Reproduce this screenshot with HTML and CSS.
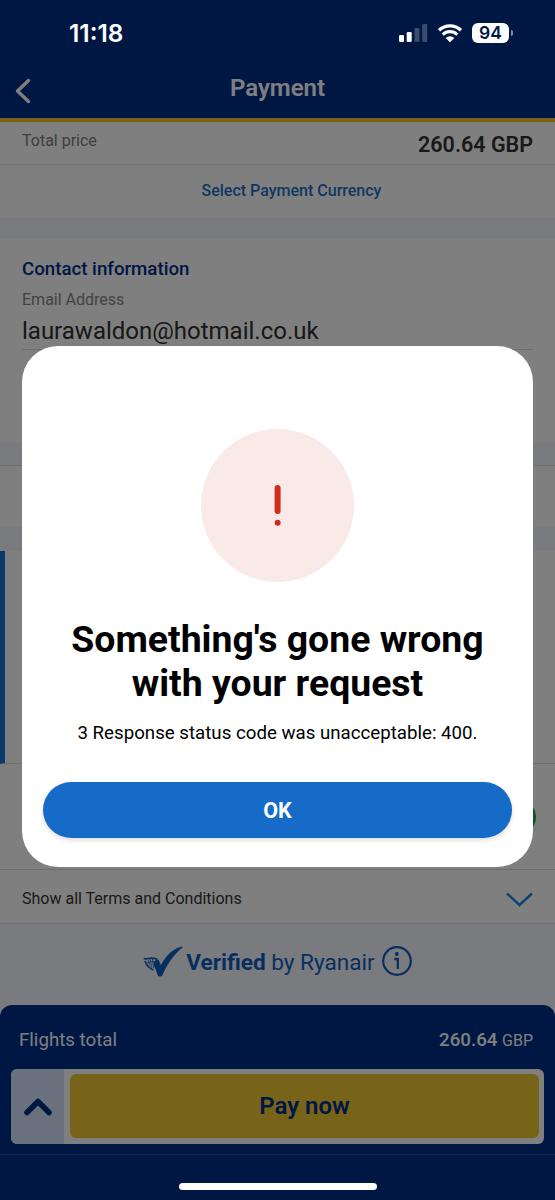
FILE: index.html
```html
<!DOCTYPE html>
<html lang="en">
<head>
    <meta charset="UTF-8">
    <meta name="viewport" content="width=device-width, initial-scale=1.0">
    <title>Payment</title>
    <link rel="stylesheet" href="styles.css">
</head>
<body>
    <div class="page">
        <header class="header">
            <svg class="back" width="16" height="26" viewBox="0 0 16 26"><path d="M13.5 2.500 2.500 13l11 10.500" fill="none" stroke="#fff" stroke-width="3.400" stroke-linecap="round" stroke-linejoin="round"/></svg>
            <h1>Payment</h1>
        </header>

        <section class="total-row">
            <span class="total-label">Total price</span>
            <span class="total-value">260.64 GBP</span>
        </section>
        <section class="currency">
            <a class="currency-link">Select Payment Currency</a>
        </section>

        <section class="contact">
            <h2>Contact information</h2>
            <div class="field-label">Email Address</div>
            <div class="field-value">laurawaldon@hotmail.co.uk</div>
        </section>

        <section class="spacer-card"></section>
        <section class="info-card"></section>
        <section class="toggle-row"><div class="toggle"></div></section>

        <section class="terms">
            <span>Show all Terms and Conditions</span>
            <svg width="28" height="16" viewBox="0 0 28 16"><path d="M2 2.500 14.500 14 27 2.500" fill="none" stroke="#1f87d8" stroke-width="2.400"/></svg>
        </section>

        <section class="verified">
            <svg class="harp" width="40" height="31" viewBox="0 0 40 31">
                <path d="M39.300.6C31 2.500 24.500 7.500 17.800 19L15.500 13.500c-2.500.3-4 2-5 4L15 30q2 .8 4 0C24.500 18 31 8 39.600 1.600z" fill="#0d5fc0"/>
                <path d="M.8 12.500c3 1.500 6.500-2 12.700.5l-1.500 8M2 15c1.500 4 4 7.500 8.500 9" fill="none" stroke="#0d5fc0" stroke-width="1.700"/>
                <path d="M5 13.500l1.500 6M7.200 13l1.500 8.500M9.500 13l1 9M4 16.500l8-1" fill="none" stroke="#0d5fc0" stroke-width=".8"/>
            </svg>
            <span class="verified-text"><b>Verified</b> by Ryanair</span>
            <svg class="info" width="30" height="30" viewBox="0 0 30 30">
                <circle cx="15" cy="15" r="13.800" fill="none" stroke="#0d5fc0" stroke-width="2.200"/>
                <circle cx="14.800" cy="8" r="2" fill="#0d5fc0"/>
                <path d="M12.300 13h3.500v10" fill="none" stroke="#0d5fc0" stroke-width="2.300"/>
            </svg>
        </section>

        <footer class="footer">
            <div class="flights">
                <span>Flights total</span>
                <span><b>260.64</b> <small>GBP</small></span>
            </div>
            <div class="pay-box">
                <div class="expand">
                    <svg width="28" height="20" viewBox="0 0 28 20"><path d="M3 15.500 14 4.500l11 11" fill="none" stroke="#002e88" stroke-width="5.600" stroke-linecap="round" stroke-linejoin="round"/></svg>
                </div>
                <button class="pay">Pay now</button>
            </div>
            <div class="footer-line"></div>
        </footer>
    </div>

    <div class="overlay">
        <div class="modal">
            <div class="alert-icon">
                <svg width="8" height="42" viewBox="0 0 8 42"><rect x=".6" y="0" width="6" height="29" rx="3" fill="#cf2b1f"/><circle cx="3.600" cy="37.700" r="3" fill="#cf2b1f"/></svg>
            </div>
            <h2>Something's gone wrong<br>with your request</h2>
            <p>3 Response status code was unacceptable: 400.</p>
            <button class="ok">OK</button>
        </div>
    </div>

    <!-- phone status bar, stays above the dimmed page -->
    <div class="status-bar">
        <span class="time">11:18</span>
        <div class="status-icons">
            <svg width="30" height="20" viewBox="0 0 30 20" fill="#fff">
                <rect x="1" y="12" width="5" height="7" rx="1.300"/>
                <rect x="8.700" y="9" width="5" height="10" rx="1.300"/>
                <rect x="16.500" y="5" width="5" height="14" rx="1.300" opacity=".23"/>
                <rect x="24.200" y="1" width="5" height="18" rx="1.300" opacity=".23"/>
            </svg>
            <svg width="26" height="20" viewBox="0 0 26 20">
                <path d="M2 7.300a16 16 0 0 1 22 0M5.700 11.600a10.600 10.600 0 0 1 14.600 0" fill="none" stroke="#fff" stroke-width="3.300"/>
                <path d="M8.700 15a6.200 6.200 0 0 1 8.600 0L13 19.300z" fill="#fff"/>
            </svg>
            <div class="battery">94</div>
        </div>
    </div>
    <div class="home-indicator"></div>
</body>
</html>
```
FILE: styles.css
```css
* {
    box-sizing: border-box;
}
body {
    margin: 0;
    width: 555px;
    height: 1200px;
    position: relative;
    overflow: hidden;
    font-family: Roboto, sans-serif;
    background-color: #f3f6fc;
}
h1, h2, p {
    margin: 0;
}
button {
    border: 0;
    padding: 0;
    font-family: inherit;
}
.page {
    height: 1200px;
    display: flex;
    flex-direction: column;
}
.page > * {
    flex-shrink: 0;
}
.header {
    height: 122px;
    padding: 78px 15px 0;
    background-color: #002e88;
    border-bottom: 4px solid #f9c52e;
    display: grid;
    grid-template-columns: 16px 1fr 16px;
    align-items: start;
}
.header h1 {
    color: #fff;
    font-size: 24px;
    line-height: 21px;
    font-weight: 600;
    text-align: center;
}
.total-row {
    height: 43px;
    padding: 9px 22px 0;
    background-color: #fff;
    border-bottom: 1px solid #e6e6ea;
    display: flex;
    justify-content: space-between;
}
.total-label {
    font-size: 16px;
    line-height: 20px;
    color: #7d7d7d;
}
.total-value {
    font-size: 21.5px;
    line-height: 27px;
    font-weight: 600;
    color: #333;
}
.currency {
    height: 52px;
    padding-top: 16px;
    background-color: #fff;
    text-align: center;
}
.currency-link {
    font-size: 16px;
    line-height: 20px;
    font-weight: 500;
    color: #1a6fc4;
    padding-left: 28px;
}
.contact {
    height: 204px;
    margin: 22px 0;
    padding: 19px 22px 0;
    background-color: #fff;
}
.contact h2 {
    font-size: 18.7px;
    line-height: 22px;
    font-weight: 500;
    color: #002e88;
}
.field-label {
    margin-top: 10px;
    font-size: 16px;
    line-height: 20px;
    color: #85858a;
}
.field-value {
    margin-top: 5px;
    height: 35px;
    font-size: 24px;
    line-height: 32px;
    color: #2e2e2e;
    border-bottom: 1px solid #ddd;
}
.spacer-card {
    height: 62px;
    background-color: #fff;
    border-top: 1px solid #dddde2;
}
.info-card {
    height: 213px;
    margin-top: 24px;
    background-color: #fff;
    border-left: 5px solid #1474d4;
    border-bottom: 1px solid #dddde2;
}
.toggle-row {
    height: 106px;
    padding: 0 19px;
    background-color: #fff;
    border-bottom: 1px solid #dddde2;
    display: flex;
    align-items: center;
    justify-content: flex-end;
}
.toggle {
    width: 60px;
    height: 36px;
    border-radius: 18px;
    background-color: #18a848;
}
.terms {
    height: 54px;
    padding: 4px 22px 0;
    background-color: #fff;
    border-bottom: 1px solid #e2e2e6;
    display: flex;
    align-items: center;
    justify-content: space-between;
    font-size: 16px;
    color: #333;
}
.verified {
    height: 81px;
    padding-bottom: 7px;
    display: flex;
    align-items: center;
    justify-content: center;
    color: #0d5fc0;
}
.verified-text {
    margin: 3px 7px 0 3px;
    font-size: 22.6px;
}
.footer {
    height: 195px;
    padding-top: 24px;
    background-color: #002e88;
    border-radius: 12px 12px 0 0;
}
.flights {
    height: 40px;
    padding: 0 22px 0 19px;
    display: flex;
    justify-content: space-between;
    font-size: 18.7px;
    line-height: 23px;
    color: #fff;
}
.flights b {
    font-weight: 500;
}
.flights small {
    font-size: 16px;
}
.pay-box {
    height: 75px;
    margin: 0 11px;
    padding: 5px 5px 6px 0;
    background-color: #fff;
    border-radius: 6px;
    display: flex;
    gap: 6px;
}
.expand {
    width: 53px;
    margin: -5px 0 -6px;
    background-color: #d3e3fc;
    border-radius: 6px 0 0 6px;
    display: flex;
    align-items: center;
    justify-content: center;
}
.pay {
    flex: 1;
    border-radius: 6px;
    background-color: #f1c931;
    color: #002e88;
    font-size: 24px;
    font-weight: 600;
}
.footer-line {
    height: 1px;
    margin-top: 10px;
    background-color: #1b4a9b;
}
.overlay {
    position: absolute;
    inset: 0;
    padding: 346px 22px 0;
    background-color: rgba(0,0,0,0.5);
}
.modal {
    height: 521px;
    padding: 83px 21px 0;
    background-color: #fff;
    border-radius: 36px;
    display: flex;
    flex-direction: column;
    align-items: center;
    text-align: center;
    color: #000;
}
.alert-icon {
    width: 153px;
    height: 153px;
    border-radius: 50%;
    background-color: #f9e9e7;
    display: flex;
    align-items: center;
    justify-content: center;
}
.modal h2 {
    margin-top: 35px;
    font-size: 37.4px;
    line-height: 44px;
    font-weight: 700;
}
.modal p {
    margin-top: 17px;
    font-size: 18.7px;
    line-height: 22px;
}
.ok {
    width: 469px;
    height: 56px;
    margin-top: 38px;
    border-radius: 28px;
    background-color: #166bc8;
    box-shadow: 0 2px 5px rgba(0,0,0,0.15);
    color: #fff;
    font-size: 21.5px;
    font-weight: 700;
}
.status-bar {
    position: absolute;
    top: 0;
    left: 0;
    right: 0;
    padding: 20px 46px 0 69px;
    display: flex;
    justify-content: space-between;
    color: #fff;
}
.time {
    font-family: Inter, sans-serif;
    font-size: 24.4px;
    line-height: 27px;
    font-weight: 600;
}
.status-icons {
    height: 25px;
    display: flex;
    align-items: center;
    gap: 9px;
}
.battery {
    position: relative;
    width: 37px;
    height: 20px;
    border-radius: 6px;
    background-color: #fff;
    color: #001744;
    font-family: Inter, sans-serif;
    font-size: 17.5px;
    line-height: 20px;
    font-weight: 600;
    text-align: center;
}
.battery::after {
    content: "";
    position: absolute;
    right: -4px;
    top: 7px;
    width: 2px;
    height: 6px;
    border-radius: 0 2px 2px 0;
    background-color: #8090ad;
}
.home-indicator {
    position: absolute;
    left: 179px;
    bottom: 10px;
    width: 198px;
    height: 7px;
    border-radius: 4px;
    background-color: #fff;
}
```
